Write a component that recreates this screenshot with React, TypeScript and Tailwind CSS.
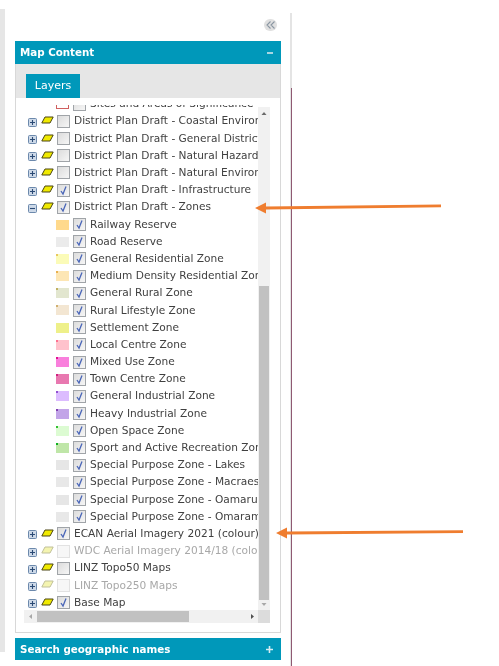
import React from "react";

const font = { fontFamily: '"DejaVu Sans", Verdana, sans-serif' };

function Expander({ open }: { open?: boolean }) {
  return (
    <svg width="9" height="9" viewBox="0 0 9 9" className="shrink-0 mt-[2px]">
      <rect x="0.5" y="0.5" width="8" height="8" rx="1" fill="#cdd9e8" stroke="#6c89ac" />
      <path d={open ? "M2 4.5H7" : "M2 4.5H7M4.5 2V7"} stroke="#2a4a75" strokeWidth="1.1" />
    </svg>
  );
}

function Para({ faded }: { faded?: boolean }) {
  return (
    <svg width="13" height="8" viewBox="0 0 13 8" className="shrink-0 -mt-[2px]">
      <path
        d="M4 1H12.2L9 7H0.8Z"
        fill={faded ? "#f4f4b0" : "#f0ea00"}
        stroke={faded ? "#c0c09a" : "#4a4515"}
        strokeWidth="1"
      />
    </svg>
  );
}

function Check({ on, faded }: { on?: boolean; faded?: boolean }) {
  return (
    <span
      className={
        "w-[13px] h-[13px] shrink-0 border flex items-center justify-center " +
        (faded ? "border-[#e2e2e2] bg-[#f7f7f7]" : "border-[#a0a4a8] bg-[linear-gradient(135deg,#dcdcdc,#f6f6f6)]")
      }
    >
      {on && (
        <svg width="11" height="11" viewBox="0 0 11 11">
          <path d="M3 6L5 9L8 1.5" fill="none" stroke="#4a66b8" strokeWidth="1.3" />
        </svg>
      )}
    </span>
  );
}

function Group({ label, on, open, faded }: { label: string; on?: boolean; open?: boolean; faded?: boolean }) {
  return (
    <div className="h-[17.2px] flex items-center pl-[4px] whitespace-nowrap">
      <Expander open={open} />
      <span className="w-[4px] shrink-0" />
      <Para faded={faded} />
      <span className="w-[3px] shrink-0" />
      <Check on={on} faded={faded} />
      <span className={"ml-[4px] " + (faded ? "text-[#a8a8a8]" : "text-[#404040]")}>{label}</span>
    </div>
  );
}

function Zone({ label, color, dot }: { label: string; color: string; dot?: string }) {
  return (
    <div className="h-[17.2px] flex items-center pl-[32px] whitespace-nowrap">
      <span className="relative w-[13px] h-[10px] shrink-0" style={{ backgroundColor: color }}>
        {dot && <span className="absolute left-0 top-0 w-[2px] h-[2px]" style={{ backgroundColor: dot }} />}
      </span>
      <span className="w-[4px] shrink-0" />
      <Check on />
      <span className="ml-[4px] text-[#404040]">{label}</span>
    </div>
  );
}

const zones: [string, string, string?][] = [
  ["Railway Reserve", "#ffd98c"],
  ["Road Reserve", "#ebebeb"],
  ["General Residential Zone", "#fbfbb8", "#e8c860"],
  ["Medium Density Residential Zone", "#fde6b4", "#e8b050"],
  ["General Rural Zone", "#e2e6cf", "#c0b060"],
  ["Rural Lifestyle Zone", "#f3e6d2", "#d0b070"],
  ["Settlement Zone", "#eef08a"],
  ["Local Centre Zone", "#ffc2cc", "#ff7090"],
  ["Mixed Use Zone", "#f97fdc", "#e01090"],
  ["Town Centre Zone", "#e878b0", "#d02080"],
  ["General Industrial Zone", "#dcbcff", "#9050d0"],
  ["Heavy Industrial Zone", "#c2a4e8", "#8040b0"],
  ["Open Space Zone", "#dcfbd2", "#30c030"],
  ["Sport and Active Recreation Zone", "#bfe6a8", "#10b020"],
  ["Special Purpose Zone - Lakes", "#e6e6e6"],
  ["Special Purpose Zone - Macraes", "#e8e8e8"],
  ["Special Purpose Zone - Oamaru", "#e6e6e6"],
  ["Special Purpose Zone - Omarama", "#e8e8e8"],
];

function Arrow({ top, left, width, rise }: { top: number; left: number; width: number; rise: number }) {
  return (
    <svg className="absolute" style={{ top, left }} width={width} height="12" viewBox={`0 0 ${width} 12`}>
      <path
        d={`M0 6L11 0.6V4.5L${width} ${4.5 - rise}V${7.3 - rise}L11 7.5V11.4Z`}
        fill="#ef7d2f"
      />
    </svg>
  );
}

export default function App() {
  return (
    <div className="relative w-[499px] h-[666px] bg-white overflow-hidden blur-[0.35px] text-[10.6px]" style={font}>
      <div className="flex h-full">
        <div className="w-[5px] mt-[9px] mb-[14px] bg-[#e6e6e6] shrink-0" />
        <div className="w-[266px] ml-[10px] shrink-0 flex flex-col">
          <div className="h-[41px] flex items-start justify-end pt-[19px] pr-[4px]">
            <span className="w-[13px] h-[12px] rounded-full bg-[#e0e0e0] flex items-center justify-center">
              <svg width="10" height="8" viewBox="0 0 10 8">
                <path d="M4.5 0.5L1 4L4.5 7.5M8.5 0.5L5 4L8.5 7.5" fill="none" stroke="#8a96a2" strokeWidth="1.1" />
              </svg>
            </span>
          </div>
          <div className="h-[23px] pt-[1px] bg-[#0098ba] flex items-center justify-between pl-[5px] pr-[8px] text-white font-bold text-[10.3px]">
            <span>Map Content</span>
            <span className="w-[6px] h-[2px] bg-[#a8d6e2]" />
          </div>
          <div className="h-[569px] border-x border-b border-[#d8d8d8] flex flex-col">
            <div className="h-[34px] bg-[#e6e6e6] flex items-end pl-[10px] shrink-0">
              <div className="w-[54px] h-[24px] bg-[#0098ba] text-white text-[11px] flex items-center justify-center">
                Layers
              </div>
            </div>
            <div className="pt-[7px] pl-[8px] pr-[10px]">
              <div className="flex h-[505px]">
                <div className="w-[234px] overflow-hidden">
                  <div className="-mt-[9.4px]">
                    <div className="h-[17.2px] flex items-center pl-[32px] whitespace-nowrap">
                      <span className="w-[13px] h-[10px] border border-[#d06060] shrink-0" />
                      <span className="w-[4px] shrink-0" />
                      <Check />
                      <span className="ml-[4px] text-[#404040]">Sites and Areas of Significance</span>
                    </div>
                    <Group label="District Plan Draft - Coastal Environment" />
                    <Group label="District Plan Draft - General District Wide" />
                    <Group label="District Plan Draft - Natural Hazards" />
                    <Group label="District Plan Draft - Natural Environment" />
                    <Group label="District Plan Draft - Infrastructure" on />
                    <Group label="District Plan Draft - Zones" on open />
                    {zones.map(([l, c, d]) => (
                      <Zone key={l} label={l} color={c} dot={d} />
                    ))}
                    <Group label="ECAN Aerial Imagery 2021 (colour)" on />
                    <Group label="WDC Aerial Imagery 2014/18 (colour)" faded />
                    <Group label="LINZ Topo50 Maps" />
                    <Group label="LINZ Topo250 Maps" faded />
                    <Group label="Base Map" on />
                  </div>
                </div>
                <div className="w-[12px] mt-[2px] bg-[#f1f1f1] flex flex-col items-center shrink-0">
                  <svg width="8" height="12" viewBox="0 0 8 12" className="shrink-0">
                    <path d="M1.5 8L4 5L6.5 8Z" fill="#6a6a6a" />
                  </svg>
                  <div className="h-[167px] shrink-0" />
                  <div className="w-[10px] h-[314px] bg-[#c1c1c1] shrink-0" />
                  <svg width="8" height="10" viewBox="0 0 8 10" className="shrink-0">
                    <path d="M1.5 3L4 6L6.5 3Z" fill="#a8a8a8" />
                  </svg>
                </div>
              </div>
              <div className="flex h-[13px]">
                <div className="w-[234px] bg-[#f1f1f1] flex items-center">
                  <svg width="13" height="13" viewBox="0 0 13 13" className="shrink-0">
                    <path d="M8 4V9L5 6.5Z" fill="#a8a8a8" />
                  </svg>
                  <div className="w-[152px] h-[11px] bg-[#c1c1c1]" />
                  <div className="flex-1" />
                  <svg width="12" height="13" viewBox="0 0 12 13" className="shrink-0">
                    <path d="M5 4V9L8 6.5Z" fill="#505050" />
                  </svg>
                </div>
                <div className="w-[12px] bg-[#dcdcdc]" />
              </div>
            </div>
          </div>
          <div className="h-[22px] mt-[5px] pt-[1px] bg-[#0098ba] flex items-center justify-between pl-[5px] pr-[8px] text-white font-bold text-[10.3px]">
            <span>Search geographic names</span>
            <svg width="7" height="7" viewBox="0 0 7 7">
              <path d="M0 3.5H7M3.5 0V7" stroke="#d5ecf2" strokeWidth="1.6" />
            </svg>
          </div>
        </div>
        <div className="ml-[9px] mt-[13px] w-[2px] bg-[#e4e4e4] shrink-0 flex flex-col">
          <div className="h-[75px]" />
          <div className="flex-1 ml-[1px] w-[1px] bg-[#8f5a72]" />
        </div>
      </div>
      <Arrow top={202} left={255} width={186} rise={2} />
      <Arrow top={527} left={276} width={187} rise={1.3} />
    </div>
  );
}
